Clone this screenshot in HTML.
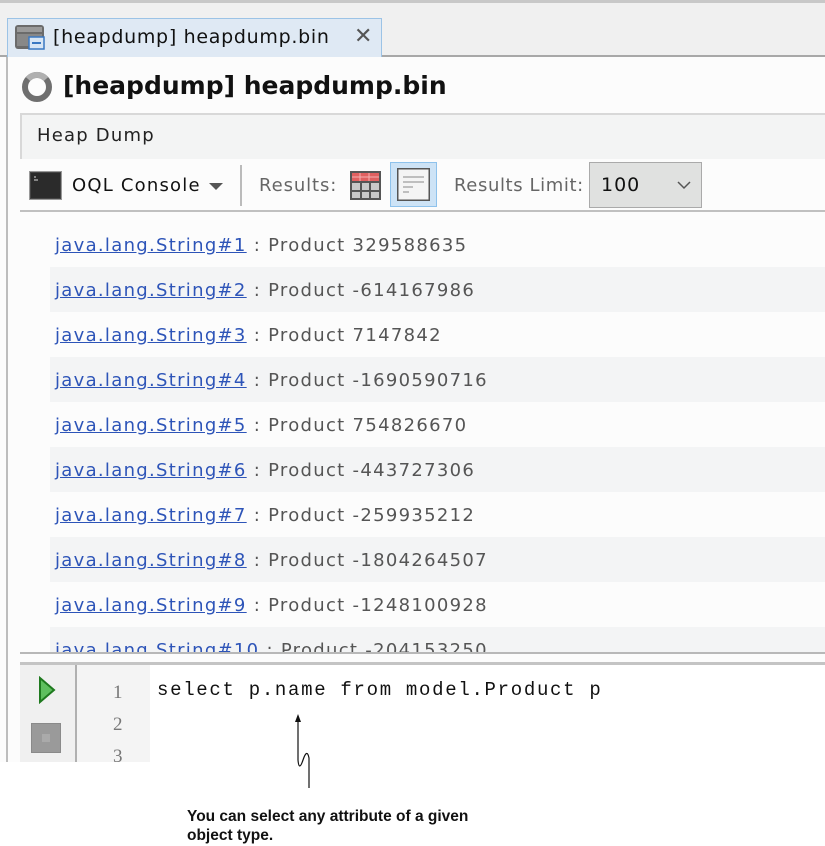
<!DOCTYPE html>
<html><head><meta charset="utf-8"><style>
*{margin:0;padding:0;box-sizing:border-box}
body{width:825px;height:846px;background:#fff;position:relative;overflow:hidden;font-family:"DejaVu Sans","Liberation Sans",sans-serif}
.abs{position:absolute}
.r{height:45px;padding:13px 0 0 5px;letter-spacing:1.3px}
.s{background:#f3f4f5}
.r u{color:#2d54b8}
</style></head><body>
<div class="abs" style="left:0;top:0;width:825px;height:3px;background:#c8c8c8"></div>
<div class="abs" style="left:0;top:3px;width:825px;height:53px;background:#f0f0f0"></div>
<div class="abs" style="left:0;top:55px;width:825px;height:2px;background:#a8a8a8"></div>
<div class="abs" style="left:7px;top:18px;width:375px;height:39px;background:#dfe9f4;border:1px solid #9cc3e6;border-bottom:none"></div>
<svg class="abs" style="left:14px;top:24px" width="32" height="28" viewBox="0 0 32 28">
<rect x="1" y="1" width="29" height="24" rx="3" fill="#6b6b6b"/>
<rect x="3" y="3" width="25" height="5" fill="#9a9a9a"/>
<rect x="3" y="10" width="25" height="12" fill="#888"/>
<rect x="15" y="13" width="15" height="12" fill="#d8e6f5" stroke="#3a78c2" stroke-width="1.5"/>
<rect x="18" y="18" width="9" height="2" fill="#3a78c2"/>
</svg>
<div class="abs" style="left:53px;top:26px;font-size:19px;color:#111;letter-spacing:.7px">[heapdump] heapdump.bin</div>
<div class="abs" style="left:354px;top:24px;font-size:22px;color:#555">✕</div>
<div class="abs" style="left:0;top:57px;width:825px;height:705px;background:#fcfcfc"></div>
<div class="abs" style="left:6px;top:57px;width:2px;height:705px;background:#bdbdbd"></div>
<svg class="abs" style="left:20px;top:70px" width="34" height="34" viewBox="0 0 34 34"><circle cx="17" cy="17" r="12" fill="none" stroke="#6f6f6f" stroke-width="6"/><path d="M8 9 A12 12 0 0 1 26 9" fill="none" stroke="#b0b0b0" stroke-width="6"/></svg>
<div class="abs" style="left:63px;top:71px;font-size:25px;font-weight:bold;color:#111">[heapdump] heapdump.bin</div>
<div class="abs" style="left:20px;top:113px;width:805px;height:46px;background:#f3f4f4;border-top:2px solid #d8d8d8;border-left:2px solid #d8d8d8"></div>
<div class="abs" style="left:37px;top:125px;font-size:18px;color:#222;letter-spacing:1.2px">Heap Dump</div>
<svg class="abs" style="left:29px;top:171px" width="33" height="29" viewBox="0 0 33 29"><rect x="0.5" y="0.5" width="32" height="28" fill="#444" stroke="#999"/><rect x="2" y="2" width="29" height="25" fill="#2b2b2b"/><path d="M5 6h2M5 9h4" stroke="#ddd" stroke-width="1"/></svg>
<div class="abs" style="left:72px;top:175px;font-size:18px;color:#111;letter-spacing:1.2px">OQL Console</div>
<div class="abs" style="left:209px;top:183px;width:0;height:0;border-left:7px solid transparent;border-right:7px solid transparent;border-top:7px solid #555"></div>
<div class="abs" style="left:240px;top:165px;width:2px;height:41px;background:#bbb"></div>
<div class="abs" style="left:259px;top:175px;font-size:18px;color:#666;letter-spacing:.9px">Results:</div>
<svg class="abs" style="left:350px;top:171px" width="31" height="29" viewBox="0 0 31 29"><rect width="31" height="29" fill="#555"/><rect x="2" y="2" width="27" height="8" fill="#e06060"/><g fill="#c8c8c8"><rect x="2" y="12" width="8" height="7"/><rect x="12" y="12" width="7" height="7"/><rect x="21" y="12" width="8" height="7"/><rect x="2" y="21" width="8" height="6"/><rect x="12" y="21" width="7" height="6"/><rect x="21" y="21" width="8" height="6"/></g><path d="M2 6h27M10 2v8M19 2v8" stroke="#f5b0b0"/></svg>
<div class="abs" style="left:390px;top:162px;width:47px;height:45px;background:#cde3f6;border:1px solid #8ec2ec"></div>
<svg class="abs" style="left:397px;top:168px" width="33" height="33" viewBox="0 0 33 33"><rect x="0.5" y="0.5" width="32" height="32" fill="#f4f4f4" stroke="#555" stroke-width="2"/><path d="M6 9h21M6 14h21M6 19h10M6 24h6" stroke="#888"/></svg>
<div class="abs" style="left:454px;top:175px;font-size:18px;color:#666;letter-spacing:.6px">Results Limit:</div>
<div class="abs" style="left:589px;top:162px;width:113px;height:46px;background:#e0e1e0;border:1px solid #aaa"></div>
<div class="abs" style="left:601px;top:174px;font-size:19px;color:#111;letter-spacing:1px">100</div>
<svg class="abs" style="left:677px;top:181px" width="14" height="9"><path d="M1 1l6 6 6-6" fill="none" stroke="#555" stroke-width="1.5"/></svg>
<div class="abs" style="left:20px;top:210px;width:805px;height:2px;background:#c0c0c0"></div>
<div class="abs" style="left:50px;top:222px;width:775px;height:430px;overflow:hidden;font-size:18px;color:#555">
<div class="r"><u>java.lang.String#1</u> : Product 329588635</div>
<div class="r s"><u>java.lang.String#2</u> : Product -614167986</div>
<div class="r"><u>java.lang.String#3</u> : Product 7147842</div>
<div class="r s"><u>java.lang.String#4</u> : Product -1690590716</div>
<div class="r"><u>java.lang.String#5</u> : Product 754826670</div>
<div class="r s"><u>java.lang.String#6</u> : Product -443727306</div>
<div class="r"><u>java.lang.String#7</u> : Product -259935212</div>
<div class="r s"><u>java.lang.String#8</u> : Product -1804264507</div>
<div class="r"><u>java.lang.String#9</u> : Product -1248100928</div>
<div class="r s"><u>java.lang.String#10</u> : Product -204153250</div>
</div>
<div class="abs" style="left:20px;top:652px;width:805px;height:13px;background:#fcfcfc;border-top:2px solid #b8b8b8;border-bottom:3px solid #c4c4c4"></div>
<div class="abs" style="left:20px;top:665px;width:55px;height:97px;background:#f0f0f0"></div>
<div class="abs" style="left:75px;top:665px;width:2px;height:97px;background:#b0b0b0"></div>
<div class="abs" style="left:77px;top:665px;width:73px;height:97px;background:#f4f4f4"></div>
<div class="abs" style="left:150px;top:665px;width:675px;height:97px;background:#fff"></div>
<svg class="abs" style="left:38px;top:676px" width="18" height="28" viewBox="0 0 18 28"><path d="M2 2L16 14L2 26Z" fill="#5fbf5f" stroke="#1f7a1f" stroke-width="2"/></svg>
<div class="abs" style="left:31px;top:723px;width:30px;height:30px;background:#9a9a9a;border:1px solid #8a8a8a"><div style="margin:10px;width:8px;height:8px;background:#aaa"></div></div>
<div class="abs" style="left:113px;top:677px;font-family:'Liberation Serif',serif;font-size:19px;color:#777;line-height:32px">1<br>2<br>3</div>
<div class="abs" style="left:157px;top:679px;font-family:'Liberation Mono',monospace;font-size:19px;letter-spacing:1.7px;color:#111">select p.name from model.Product p</div>
<div class="abs" style="left:0;top:762px;width:825px;height:84px;background:#fff"></div>
<svg class="abs" style="left:290px;top:710px" width="30" height="80" viewBox="0 0 30 80"><path d="M8 4l-3 8h6z" fill="#111"/><path d="M8 12 V50 Q9 62 13 50 Q17 38 19 48 V78" fill="none" stroke="#111" stroke-width="1.2"/></svg>
<div class="abs" style="left:187px;top:807px;font-family:'Liberation Sans',sans-serif;font-weight:bold;font-size:15.5px;line-height:19px;color:#111;white-space:nowrap">You can select any attribute of a given<br>object type.</div>
</body></html>
